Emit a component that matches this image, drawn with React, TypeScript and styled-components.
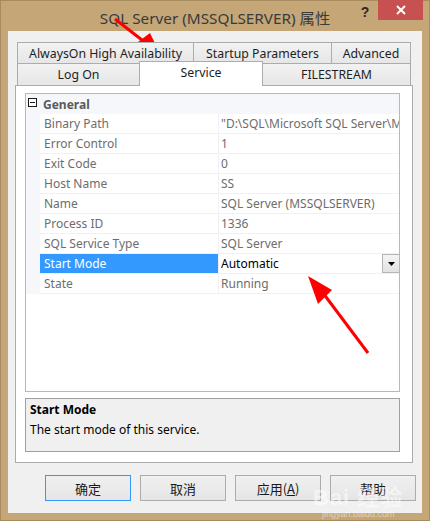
import React from "react";
import styled, { createGlobalStyle } from "styled-components";

const Global = createGlobalStyle`
  html, body { margin: 0; padding: 0; }
  body { width: 430px; height: 521px; overflow: hidden; font-family: "Noto Sans", "Noto Sans CJK SC", sans-serif; }
`;

const Window = styled.div`
  position: relative;
  width: 430px;
  height: 521px;
  box-sizing: border-box;
  background: #c4a677;
  border: 1px solid #a78b5e;
  display: flex;
  flex-direction: column;
`;

const TitleBar = styled.div`
  height: 30px;
  display: grid;
  grid-template-columns: 1fr auto 1fr;
  align-items: start;
`;

const Title = styled.div`
  padding-top: 5px;
  font-size: 15.3px;
  color: #3a3a3a;
  font-family: "Noto Sans", "Noto Sans CJK SC", sans-serif;
`;

const Controls = styled.div`
  display: flex;
  justify-content: flex-end;
  padding-right: 6px;
`;

const HelpBtn = styled.div`
  width: 26px;
  height: 20px;
  display: flex;
  align-items: center;
  justify-content: center;
  font-weight: bold;
  font-size: 14px;
  color: #2a2a2a;
  font-family: "Liberation Sans", sans-serif;
  padding-top: 2px;
  box-sizing: border-box;
`;

const CloseBtn = styled.div`
  width: 45px;
  height: 20px;
  margin-top: -1px;
  background: #c75050;
  display: flex;
  align-items: center;
  justify-content: center;
`;

const Client = styled.div`
  flex: 1;
  margin: 0 7px 7px 7px;
  background: #f0f0f0;
  display: flex;
  flex-direction: column;
  padding: 11px 0 0 7px;
  box-sizing: border-box;
`;

const TabRows = styled.div`
  margin-left: 2px;
  width: 393px;
  display: flex;
  flex-direction: column;
  position: relative;
  z-index: 2;
`;

const TabRow = styled.div<{ h: number }>`
  display: flex;
  height: ${(p) => p.h}px;
`;

const Tab = styled.div<{ w: number; selected?: boolean }>`
  width: ${(p) => p.w}px;
  box-sizing: border-box;
  border: 1px solid #acacac;
  border-bottom: none;
  margin-right: -1px;
  display: flex;
  align-items: center;
  justify-content: center;
  font-size: 12.3px;
  color: #1e1e1e;
  background: linear-gradient(#f2f2f2, #e6e6e6);
  ${(p) =>
    p.selected
      ? `
    background: #ffffff;
    margin-top: -2px;
    height: calc(100% + 3px);
    position: relative;
    z-index: 3;
    align-items: flex-start;
    padding-top: 2px;
  `
      : ""}
`;

const Panel = styled.div`
  width: 398px;
  height: 378px;
  box-sizing: border-box;
  border: 1px solid #acacac;
  background: #ffffff;
  padding: 7px 12px 10px 9px;
  display: flex;
  flex-direction: column;
  gap: 6px;
`;

const Grid = styled.div`
  height: 299px;
  box-sizing: border-box;
  border: 1px solid #99bfe6;
  display: flex;
  flex-direction: column;
  background: #ffffff;
  font-size: 12px;
`;

const CategoryRow = styled.div`
  height: 20px;
  display: flex;
  align-items: center;
  background: #f5f7fb;
  color: #5a5a5a;
  font-weight: bold;
`;

const Toggle = styled.div`
  width: 9px;
  height: 9px;
  box-sizing: border-box;
  border: 1px solid #1a1a1a;
  margin: 0 6px 3px 2px;
  position: relative;
  background: #fff;
  &::after {
    content: "";
    position: absolute;
    left: 1px;
    right: 1px;
    top: 3px;
    height: 1px;
    background: #1a1a1a;
  }
`;

const Row = styled.div`
  height: 20px;
  display: flex;
  box-sizing: border-box;
`;

const Gutter = styled.div`
  width: 14px;
  background: #f5f7fb;
  flex-shrink: 0;
`;

const Label = styled.div<{ sel?: boolean }>`
  width: 179px;
  box-sizing: border-box;
  padding-left: 4px;
  display: flex;
  align-items: center;
  border-bottom: 1px solid #f0f0f6;
  border-right: 1px solid #f0f0f6;
  color: ${(p) => (p.sel ? "#ffffff" : "#6d6d6d")};
  background: ${(p) => (p.sel ? "#3399ff" : "#ffffff")};
  white-space: nowrap;
`;

const Value = styled.div<{ active?: boolean }>`
  flex: 1;
  min-width: 0;
  box-sizing: border-box;
  padding-left: 2px;
  display: flex;
  align-items: center;
  border-bottom: 1px solid #f0f0f6;
  color: ${(p) => (p.active ? "#000000" : "#6d6d6d")};
  white-space: nowrap;
  overflow: hidden;
`;

const ValueText = styled.span`
  flex: 1;
  overflow: hidden;
`;

const DropBtn = styled.div`
  width: 17px;
  height: 19px;
  box-sizing: border-box;
  border: 1px solid #b5b5b5;
  border-right: none;
  background: linear-gradient(#f4f4f4, #e2e2e2);
  display: flex;
  align-items: center;
  justify-content: center;
  flex-shrink: 0;
`;

const Desc = styled.div`
  height: 54px;
  box-sizing: border-box;
  border: 1px solid #a0a0a0;
  background: #f0f0f0;
  padding: 2px 4px;
  font-size: 12px;
  color: #000;
  display: flex;
  flex-direction: column;
  gap: 3px;
`;

const DescTitle = styled.div`
  font-weight: bold;
`;

const Buttons = styled.div`
  display: flex;
  gap: 9px;
  margin-top: 12px;
  padding-left: 30px;
`;

const Button = styled.div<{ def?: boolean }>`
  width: 86px;
  height: 26px;
  box-sizing: border-box;
  border: 1px solid ${(p) => (p.def ? "#3399ff" : "#acacac")};
  background: linear-gradient(#f0f0f0, #e5e5e5);
  display: flex;
  align-items: center;
  justify-content: center;
  font-size: 13px;
  color: #1a1a1a;
  font-family: "Noto Sans CJK SC", "Noto Sans", sans-serif;
`;

const Watermark = styled.div`
  position: absolute;
  left: 312px;
  top: 486px;
  color: rgba(255, 255, 255, 0.5);
  font-family: "Liberation Sans", "Noto Sans CJK SC", sans-serif;
  pointer-events: none;
  line-height: 1;
  text-align: center;
`;

const WmBig = styled.div`
  font-size: 22px;
  font-weight: bold;
  letter-spacing: 1px;
`;

const WmSmall = styled.div`
  font-size: 9px;
  margin-top: 1px;
`;

const Overlay = styled.svg`
  position: absolute;
  left: 0;
  top: 0;
  pointer-events: none;
`;

const rows: [string, string][] = [
  ["Binary Path", '"D:\\SQL\\Microsoft SQL Server\\MSSQL11.MSSQLSERVER'],
  ["Error Control", "1"],
  ["Exit Code", "0"],
  ["Host Name", "SS"],
  ["Name", "SQL Server (MSSQLSERVER)"],
  ["Process ID", "1336"],
  ["SQL Service Type", "SQL Server"],
  ["Start Mode", "Automatic"],
  ["State", "Running"],
];

export default function App() {
  return (
    <>
      <Global />
      <Window>
        <TitleBar>
          <div />
          <Title>SQL Server (MSSQLSERVER) 属性</Title>
          <Controls>
            <HelpBtn>?</HelpBtn>
            <CloseBtn>
              <svg width="10" height="10" viewBox="0 0 10 10">
                <path d="M1 1 L9 9 M9 1 L1 9" stroke="#ffffff" strokeWidth="2" />
              </svg>
            </CloseBtn>
          </Controls>
        </TitleBar>
        <Client>
          <TabRows>
            <TabRow h={21}>
              <Tab w={177}>AlwaysOn High Availability</Tab>
              <Tab w={139}>Startup Parameters</Tab>
              <Tab w={80}>Advanced</Tab>
            </TabRow>
            <TabRow h={22}>
              <Tab w={123}>Log On</Tab>
              <Tab w={124} selected>
                Service
              </Tab>
              <Tab w={149}>FILESTREAM</Tab>
            </TabRow>
          </TabRows>
          <Panel>
            <Grid>
              <CategoryRow>
                <Toggle />
                General
              </CategoryRow>
              {rows.map(([k, v]) => {
                const sel = k === "Start Mode";
                return (
                  <Row key={k}>
                    <Gutter />
                    <Label sel={sel}>{k}</Label>
                    <Value active={sel}>
                      <ValueText>{v}</ValueText>
                      {sel && (
                        <DropBtn>
                          <svg width="7" height="4" viewBox="0 0 7 4">
                            <path d="M0 0 H7 L3.5 4 Z" fill="#000" />
                          </svg>
                        </DropBtn>
                      )}
                    </Value>
                  </Row>
                );
              })}
            </Grid>
            <Desc>
              <DescTitle>Start Mode</DescTitle>
              <div>The start mode of this service.</div>
            </Desc>
          </Panel>
          <Buttons>
            <Button def>确定</Button>
            <Button>取消</Button>
            <Button>
              应用(<u>A</u>)
            </Button>
            <Button>帮助</Button>
          </Buttons>
        </Client>
        <Watermark>
          <WmBig>Bai 经验</WmBig>
          <WmSmall>jingyan.baidu.com</WmSmall>
        </Watermark>
        <Overlay width="430" height="521" viewBox="0 0 430 521">
          <line x1="114" y1="18" x2="150" y2="46" stroke="#ff0000" strokeWidth="3" />
          <polygon points="163,61 137,41 149,32" fill="#ff0000" />
          <line x1="367" y1="352" x2="322" y2="292" stroke="#ff0000" strokeWidth="3" />
          <polygon points="307,275 331,289 317,303" fill="#ff0000" />
        </Overlay>
      </Window>
    </>
  );
}
